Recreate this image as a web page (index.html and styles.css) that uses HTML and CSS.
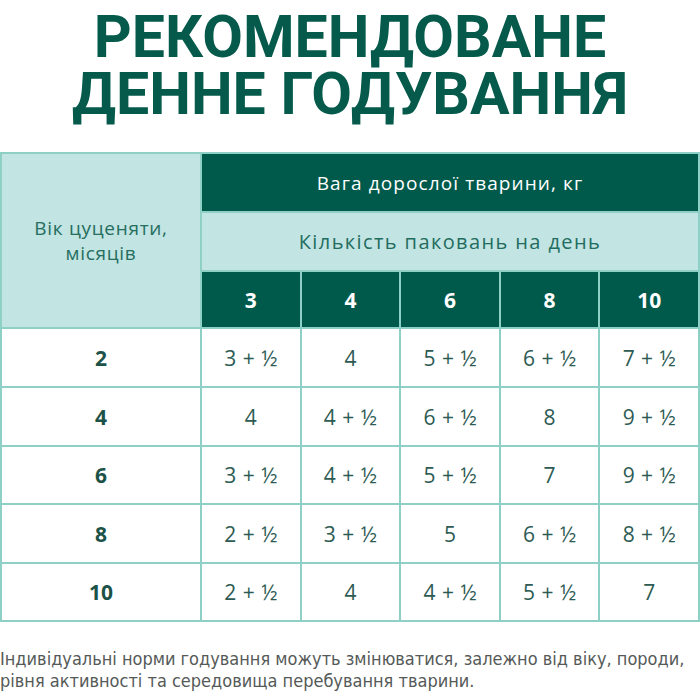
FILE: index.html
```html
<!DOCTYPE html>
<html lang="uk">
<head>
<meta charset="utf-8">
<link rel="stylesheet" href="styles.css">
</head>
<body>
<div class="page">
  <h1 class="title"><span class="tline">РЕКОМЕНДОВАНЕ</span><span class="tline">ДЕННЕ ГОДУВАННЯ</span></h1>
  <table class="feed">
    <tr class="r1">
      <th class="age" rowspan="3">Вік цуценяти,<br>місяців</th>
      <th class="dark wide w1" colspan="5">Вага дорослої тварини, кг</th>
    </tr>
    <tr class="r2">
      <th class="light wide w2" colspan="5">Кількість паковань на день</th>
    </tr>
    <tr class="r3">
      <th class="dark num">3</th>
      <th class="dark num">4</th>
      <th class="dark num">6</th>
      <th class="dark num">8</th>
      <th class="dark num">10</th>
    </tr>
    <tr class="b1">
      <td class="first">2</td><td>3 + ½</td><td>4</td><td>5 + ½</td><td>6 + ½</td><td>7 + ½</td>
    </tr>
    <tr class="b2">
      <td class="first">4</td><td>4</td><td>4 + ½</td><td>6 + ½</td><td>8</td><td>9 + ½</td>
    </tr>
    <tr class="b3">
      <td class="first">6</td><td>3 + ½</td><td>4 + ½</td><td>5 + ½</td><td>7</td><td>9 + ½</td>
    </tr>
    <tr class="b4">
      <td class="first">8</td><td>2 + ½</td><td>3 + ½</td><td>5</td><td>6 + ½</td><td>8 + ½</td>
    </tr>
    <tr class="b5">
      <td class="first">10</td><td>2 + ½</td><td>4</td><td>4 + ½</td><td>5 + ½</td><td>7</td>
    </tr>
  </table>
  <p class="note">Індивідуальні норми годування можуть змінюватися, залежно від віку, породи,<br>рівня активності та середовища перебування тварини.</p>
</div>
</body>
</html>
```

FILE: styles.css
```css
html, body {
  margin: 0;
  padding: 0;
  background: #ffffff;
}
.page {
  width: 700px;
}
.title {
  margin: 0;
  padding-top: 8px;
  font-family: Roboto, "Liberation Sans", sans-serif;
  font-weight: 700;
  font-size: 59px;
  letter-spacing: 0;
  text-align: center;
  color: #055a4b;
}
.tline {
  display: block;
  height: 57px;
  line-height: 57px;
}
.feed {
  margin-top: 30px;
  width: 700px;
  border-collapse: collapse;
  table-layout: fixed;
  border: 2px solid #8fd0c6;
  font-family: "Open Sans", "DejaVu Sans", sans-serif;
}
.feed th, .feed td {
  border: 2px solid #8fd0c6;
  padding: 0;
  text-align: center;
  vertical-align: middle;
}
.feed .age {
  width: 198px;
  background: #c2e4e2;
  color: #256e60;
  font-weight: 400;
  font-size: 19px;
  line-height: 25px;
  letter-spacing: 0.7px;
}
.feed .dark {
  background: #005a4b;
  color: #ffffff;
}
.feed .light {
  background: #c2e4e2;
  color: #236d60;
}
.feed .wide {
  font-weight: 400;
}
.feed .w1 {
  font-size: 19px;
  letter-spacing: 1.1px;
}
.feed .w2 {
  font-size: 20px;
  letter-spacing: 1.4px;
}
.feed .num {
  font-size: 21px;
  font-weight: 700;
}
.r1, .r2 { height: 59px; }
.r3 { height: 57px; }
.b1, .b2, .b4 { height: 59px; }
.b3, .b5 { height: 58px; }
.feed td {
  font-size: 21px;
  word-spacing: 1px;
  color: #2d5b53;
  background: #ffffff;
}
.feed td.first {
  font-weight: 700;
  color: #1c5247;
}
.note {
  margin: 26px 0 0 0;
  font-family: "Liberation Sans Narrow", "DejaVu Sans Condensed", "Liberation Sans", sans-serif;
  font-size: 18px;
  line-height: 22px;
  color: #555a58;
}
```
